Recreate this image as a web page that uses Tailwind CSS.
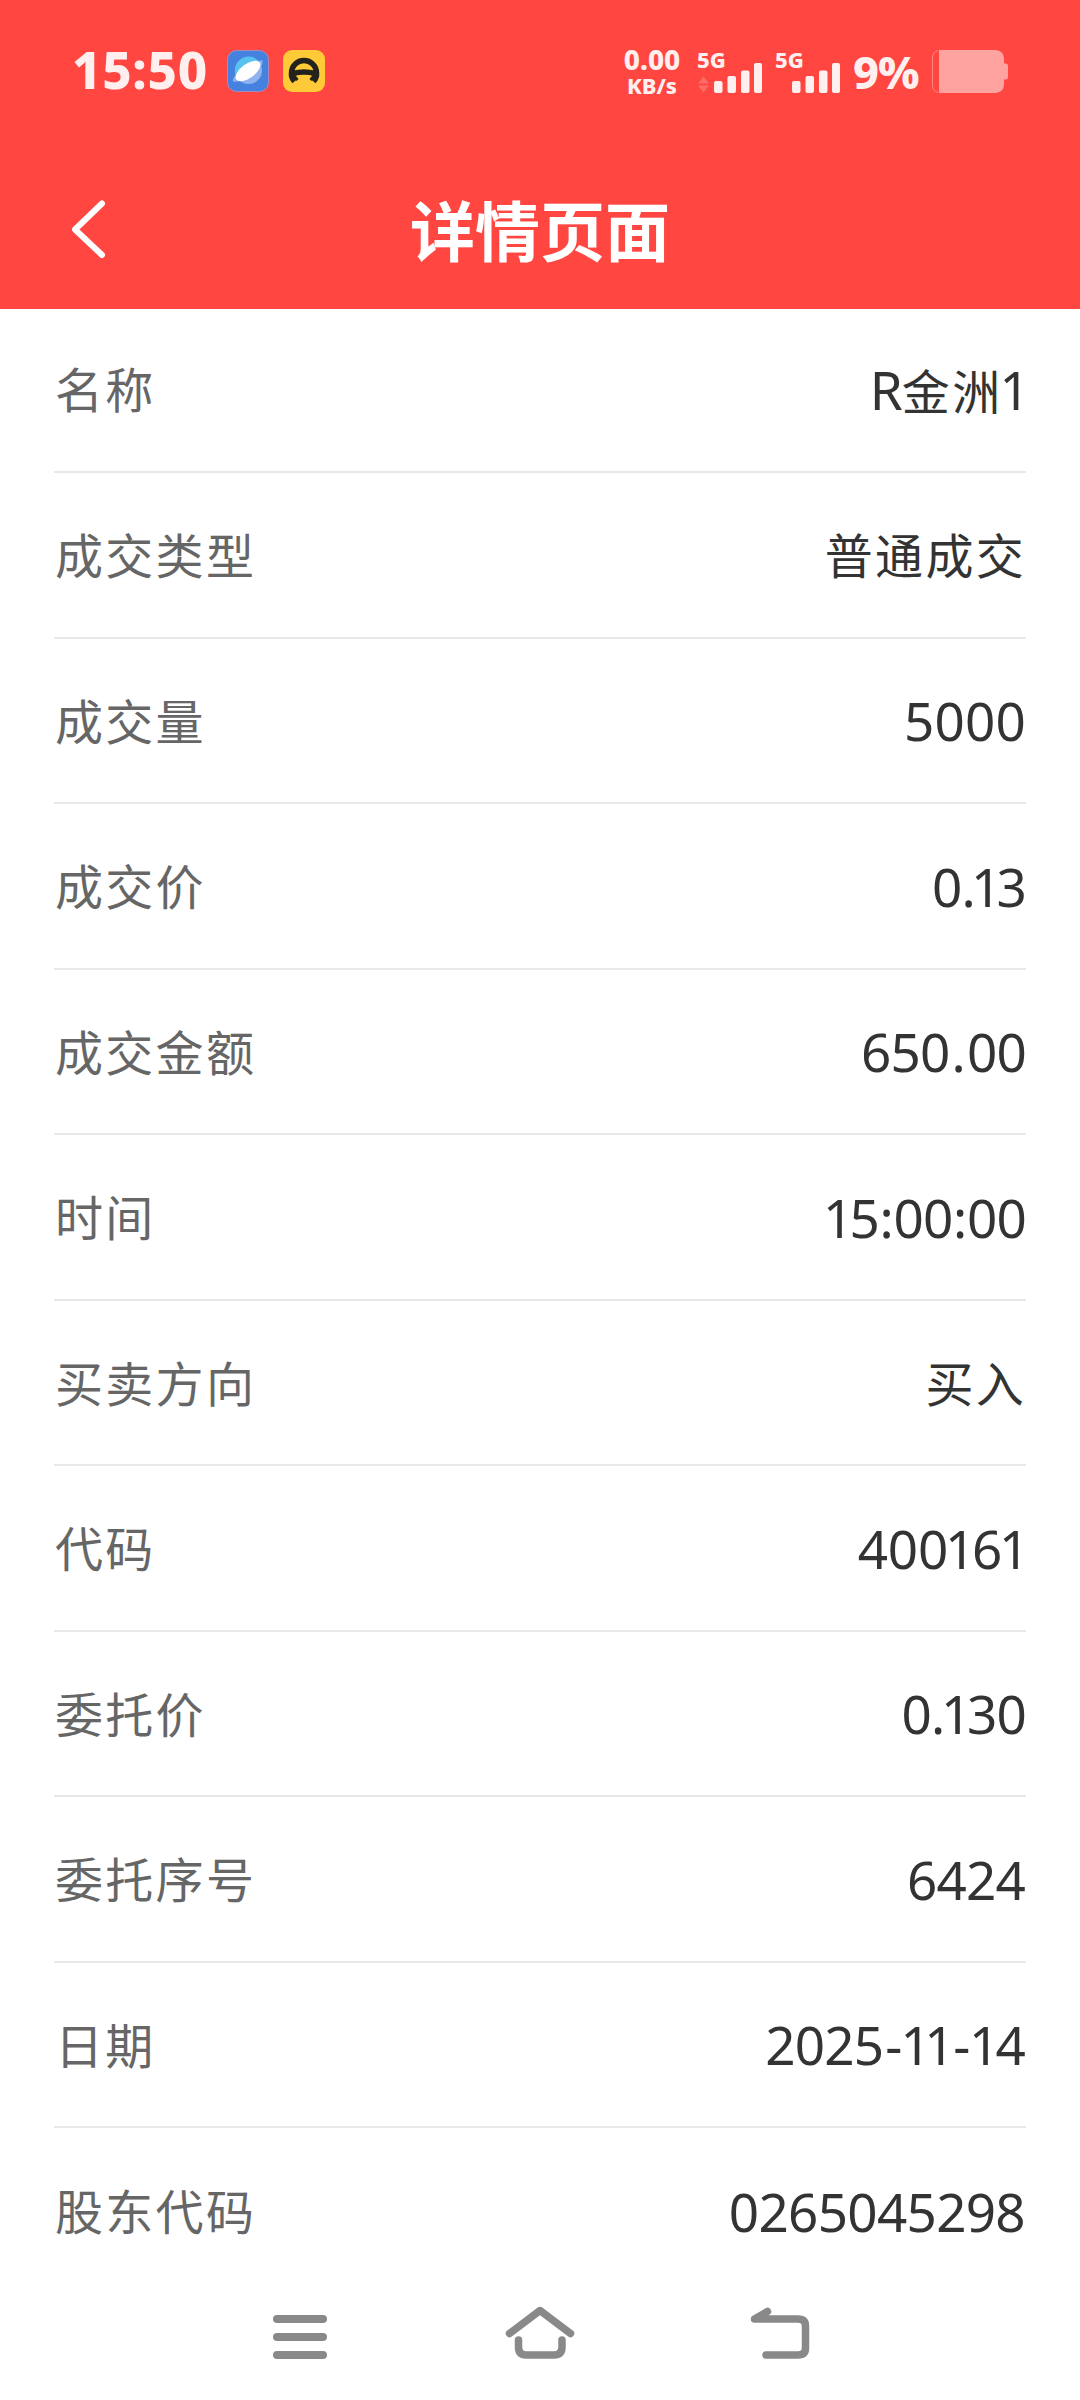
<!DOCTYPE html>
<html lang="zh-CN">
<head>
    <meta charset="UTF-8">
    <meta name="viewport" content="width=device-width, initial-scale=1.0">
    <title>详情页面</title>
    <script src="https://cdn.jsdelivr.net/npm/@tailwindcss/browser@4"></script>
</head>
<body class="bg-white font-['Noto_Sans','Noto_Sans_CJK_SC',sans-serif]">
    <div class="flex flex-col w-[1080px] h-[2400px] overflow-hidden">
        <header class="h-[309px] shrink-0 bg-[#ff4641] text-white">
            <!-- Status bar -->
            <div class="h-[142px] flex items-center text-[#ffefef] font-extrabold">
                <span class="w-[155px] ml-[72px] pb-[3px] text-[51px] leading-none tracking-[0.7px] whitespace-nowrap">15:50</span>
                <svg class="w-[42px] h-[42px] shrink-0" viewBox="0 0 42 42">
                    <rect x="0.5" y="0.5" width="41" height="41" rx="9" fill="#4582e0" stroke="#a88bc0" />
                    <circle cx="21.5" cy="20.5" r="13.5" fill="#8fb2ee" />
                    <path d="M8 21A13.5 13.5 0 0 1 33 13L9 27z" fill="#58c2ee" />
                    <path d="M6 31.500Q5 28 9 25L31 11.500Q36 9 35.500 12Q35 17 30 22Q17 33 6 31.500z" fill="#8fb2ee" />
                    <ellipse cx="21" cy="21" rx="14.5" ry="7" transform="rotate(-36 21 21)" fill="#fff" />
                </svg>
                <svg class="w-[42px] h-[42px] shrink-0 ml-[14px]" viewBox="0 0 42 42">
                    <rect width="42" height="42" rx="9" fill="#ffca38" />
                    <path d="M11.5 31.5Q8 27.5 8.5 23A12.5 12.5 0 0 1 33.5 23Q34 27.5 30.5 31.5M10 23.5Q21 20.5 32 23.5" fill="none" stroke="#24221c" stroke-width="5.5" />
                    <path d="M11 26L14.5 30M31 26L27.5 30" stroke="#24221c" stroke-width="3" />
                </svg>
                <div class="w-[60px] ml-[297px] flex flex-col items-center leading-none whitespace-nowrap">
                    <span class="text-[28px] leading-[25px]">0.00</span>
                    <span class="text-[22px] leading-[22px] pt-[2px]">KB/s</span>
                </div>
                <div class="relative w-[64px] h-[44px] ml-[16px]">
                    <span class="absolute -left-[1px] top-0 text-[22px] leading-[20px]">5G</span>
                    <svg class="w-[64px] h-[44px]" viewBox="0 0 64 44" fill="#ffefef">
                        <path d="M0 34.5L5.5 27.5L11 34.5zM0 36.5L5.5 43.5L11 36.5z" fill="#ff6b67" />
                        <rect x="16" y="32" width="8.5" height="12" rx="2" />
                        <rect x="29.5" y="27" width="8.5" height="17" rx="2" />
                        <rect x="43" y="21.5" width="8.5" height="22.5" rx="2" />
                        <rect x="56" y="14" width="8" height="30" rx="2" />
                    </svg>
                </div>
                <div class="relative w-[64px] h-[44px] ml-[14px]">
                    <span class="absolute -left-[1px] top-0 text-[22px] leading-[20px]">5G</span>
                    <svg class="w-[64px] h-[44px]" viewBox="0 0 64 44" fill="#ffefef">
                        <rect x="16" y="32" width="8.5" height="12" rx="2" />
                        <rect x="29.5" y="27" width="8.5" height="17" rx="2" />
                        <rect x="43" y="21.5" width="8.5" height="22.5" rx="2" />
                        <rect x="56" y="14" width="8" height="30" rx="2" />
                    </svg>
                </div>
                <span class="w-[79px] ml-[13px] text-[45px] leading-none tracking-[-1px] whitespace-nowrap">9%</span>
                <svg class="w-[76px] h-[43px] shrink-0" viewBox="0 0 76 43">
                    <path d="M6 0.5Q0.5 2 0.5 8V35Q0.5 41 6 42.5" fill="none" stroke="#ff8683" />
                    <path d="M7 0H64Q72 1 72 9V13.5H74Q76 13.5 76 16V27Q76 29.5 74 29.5H72V34Q72 42 64 43H7z" fill="#ffa3a0" />
                </svg>
            </div>

            <!-- Title bar -->
            <div class="h-[167px] pt-[11px] grid grid-cols-3 items-center">
                <svg class="w-[40px] h-[64px] ml-[67px] mb-[5px]" viewBox="0 0 40 64" fill="none" stroke="#fff" stroke-width="6" stroke-linecap="round" stroke-linejoin="round">
                    <path d="M35 6.5L8 32.5L35 58" />
                </svg>
                <h1 class="text-center text-[65px] leading-[80px] font-bold whitespace-nowrap">详情页面</h1>
            </div>
        </header>

        <main class="flex-1 min-h-0 px-[54px] text-[53px] tracking-[-0.8px] text-[#333] whitespace-nowrap">
            <div class="h-[164px] flex items-center justify-between border-b-2 border-[#e8e8e8]">
                <span class="pl-[1px] text-[48px] tracking-[2.3px] text-[#666]">名称</span>
                <span>R<span class="text-[48px] tracking-[2.3px]">金洲</span><span class="-mx-[3px]">1</span></span>
            </div>
            <div class="h-[165.5px] pt-[3px] flex items-center justify-between border-b-2 border-[#e8e8e8]">
                <span class="pl-[1px] text-[48px] tracking-[2.3px] text-[#666]">成交类型</span>
                <span class="text-[48px] tracking-[2.3px]">普通成交</span>
            </div>
            <div class="h-[165.5px] pt-[3px] flex items-center justify-between border-b-2 border-[#e8e8e8]">
                <span class="pl-[1px] text-[48px] tracking-[2.3px] text-[#666]">成交量</span>
                <span class="pb-[2px] tracking-[0.2px]">5000</span>
            </div>
            <div class="h-[165.5px] pt-[3px] flex items-center justify-between border-b-2 border-[#e8e8e8]">
                <span class="pl-[1px] text-[48px] tracking-[2.3px] text-[#666]">成交价</span>
                <span class="pb-[2px]">0.<span class="-mx-[4px]">1</span>3</span>
            </div>
            <div class="h-[165.5px] pt-[3px] flex items-center justify-between border-b-2 border-[#e8e8e8]">
                <span class="pl-[1px] text-[48px] tracking-[2.3px] text-[#666]">成交金额</span>
                <span class="pb-[2px]">650<span class="mx-[2px]">.</span>00</span>
            </div>
            <div class="h-[165.5px] pt-[3px] flex items-center justify-between border-b-2 border-[#e8e8e8]">
                <span class="pl-[1px] text-[48px] tracking-[2.3px] text-[#666]">时间</span>
                <span class="pb-[2px]"><span class="-mx-[3px]">1</span>5<span class="mx-[0.5px]">:</span>00<span class="mx-[0.5px]">:</span>00</span>
            </div>
            <div class="h-[165.5px] pt-[3px] flex items-center justify-between border-b-2 border-[#e8e8e8]">
                <span class="pl-[1px] text-[48px] tracking-[2.3px] text-[#666]">买卖方向</span>
                <span class="text-[48px] tracking-[2.3px]">买入</span>
            </div>
            <div class="h-[165.5px] pt-[3px] flex items-center justify-between border-b-2 border-[#e8e8e8]">
                <span class="pl-[1px] text-[48px] tracking-[2.3px] text-[#666]">代码</span>
                <span class="pb-[2px] tracking-[-0.3px]">400<span class="-mx-[3px]">1</span>6<span class="-mx-[3px]">1</span></span>
            </div>
            <div class="h-[165.5px] pt-[3px] flex items-center justify-between border-b-2 border-[#e8e8e8]">
                <span class="pl-[1px] text-[48px] tracking-[2.3px] text-[#666]">委托价</span>
                <span class="pb-[2px]">0.<span class="-mx-[3.5px]">1</span>30</span>
            </div>
            <div class="h-[165.5px] pt-[3px] flex items-center justify-between border-b-2 border-[#e8e8e8]">
                <span class="pl-[1px] text-[48px] tracking-[2.3px] text-[#666]">委托序号</span>
                <span class="pb-[2px] pr-[1px]">6424</span>
            </div>
            <div class="h-[165.5px] pt-[3px] flex items-center justify-between border-b-2 border-[#e8e8e8]">
                <span class="pl-[1px] text-[48px] tracking-[2.3px] text-[#666]">日期</span>
                <span class="pb-[2px] pr-[1px]">2025<span class="mx-[2px]">-</span><span class="-mx-[3px]">1</span><span class="-mx-[3px]">1</span><span class="mx-[2.5px]">-</span><span class="-mx-[3px]">1</span>4</span>
            </div>
            <div class="h-[165.5px] pt-[3px] flex items-center justify-between">
                <span class="pl-[1px] text-[48px] tracking-[2.3px] text-[#666]">股东代码</span>
                <span class="pb-[2px] pr-[1px] tracking-[-0.7px]">0265045298</span>
            </div>
        </main>

        <!-- System navigation -->
        <nav class="h-[108px] shrink-0 flex justify-center">
            <svg class="w-[600px] h-[108px]" viewBox="240 2292 600 108" fill="none" stroke="#898989" stroke-width="7.5" stroke-linejoin="round" stroke-linecap="round">
                <path d="M277 2319H323M277 2337H323M277 2355H323" stroke-width="8" />
                <path d="M509.5 2333.5L540 2310.5L570.5 2333.5M518.5 2340V2347Q518.5 2355 526 2355H554Q562 2355 562 2347V2340" />
                <path d="M766 2355H798Q805.5 2355 805.5 2348V2326Q805.5 2319 798 2319H754.5L767.5 2311.5" />
            </svg>
        </nav>
    </div>
</body>
</html>
